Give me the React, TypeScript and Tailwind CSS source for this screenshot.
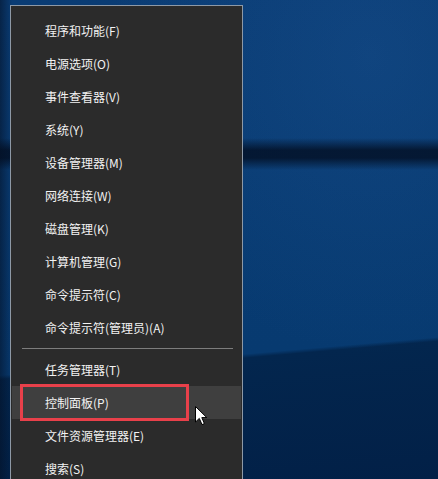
const ITEMS_TOP = [
  "程序和功能(F)",
  "电源选项(O)",
  "事件查看器(V)",
  "系统(Y)",
  "设备管理器(M)",
  "网络连接(W)",
  "磁盘管理(K)",
  "计算机管理(G)",
  "命令提示符(C)",
  "命令提示符(管理员)(A)",
];

const ITEMS_BOTTOM = ["任务管理器(T)", "控制面板(P)", "文件资源管理器(E)", "搜索(S)"];

function MenuRow({ label, active }: { label: string; active?: boolean }) {
  return (
    <div
      className={
        "relative mx-px flex h-[33px] items-center pl-[33px] text-[12px] text-[#f2f2f2] " +
        (active ? "bg-[#3f3f3f]" : "")
      }
    >
      <span>{label}</span>
      {/* red annotation box drawn on the screenshot */}
      {active && (
        <div className="absolute left-[8px] top-[-2px] h-[37px] w-[169px] border-[3px] border-[#e8404a]" />
      )}
    </div>
  );
}

function Cursor() {
  return (
    <svg
      className="absolute left-[195px] top-[406px]"
      width="13"
      height="20"
      viewBox="0 0 13 20"
    >
      <path
        d="M0.5 0.5 L0.5 16 L4.3 12.4 L7 18.6 L9.4 17.6 L6.8 11.6 L11.8 11.6 Z"
        fill="#ffffff"
        stroke="#000000"
        strokeWidth="1"
        strokeLinejoin="round"
      />
    </svg>
  );
}

export default function App() {
  return (
    <div
      className="relative h-[479px] w-[438px] overflow-hidden bg-[#083a70] bg-[linear-gradient(to_right,rgba(4,16,36,0.55)_0px,transparent_12px),linear-gradient(to_bottom,transparent_138px,rgba(2,14,34,0.8)_150px,rgba(2,14,34,0.8)_158px,transparent_170px),radial-gradient(ellipse_at_370px_55px,rgba(40,100,170,0.22),transparent_50%),linear-gradient(175deg,#0a3c74_0px,#073a70_374px,#03264e_378px,#022047_100%)] pl-[10px] pt-[5px]"
      style={{ fontFamily: '"Noto Sans CJK SC", "Noto Sans", sans-serif' }}
    >
      <div className="h-[500px] w-[233px] border border-[#8e99a6] bg-[#2b2b2b] pt-[8px]">
        {ITEMS_TOP.map((label) => (
          <MenuRow key={label} label={label} />
        ))}
        <div className="flex h-[9px] items-center pl-[11px] pr-[9px]">
          <div className="h-px w-full bg-[#7d7d7d]" />
        </div>
        {ITEMS_BOTTOM.map((label) => (
          <MenuRow key={label} label={label} active={label === "控制面板(P)"} />
        ))}
      </div>
      <Cursor />
    </div>
  );
}
